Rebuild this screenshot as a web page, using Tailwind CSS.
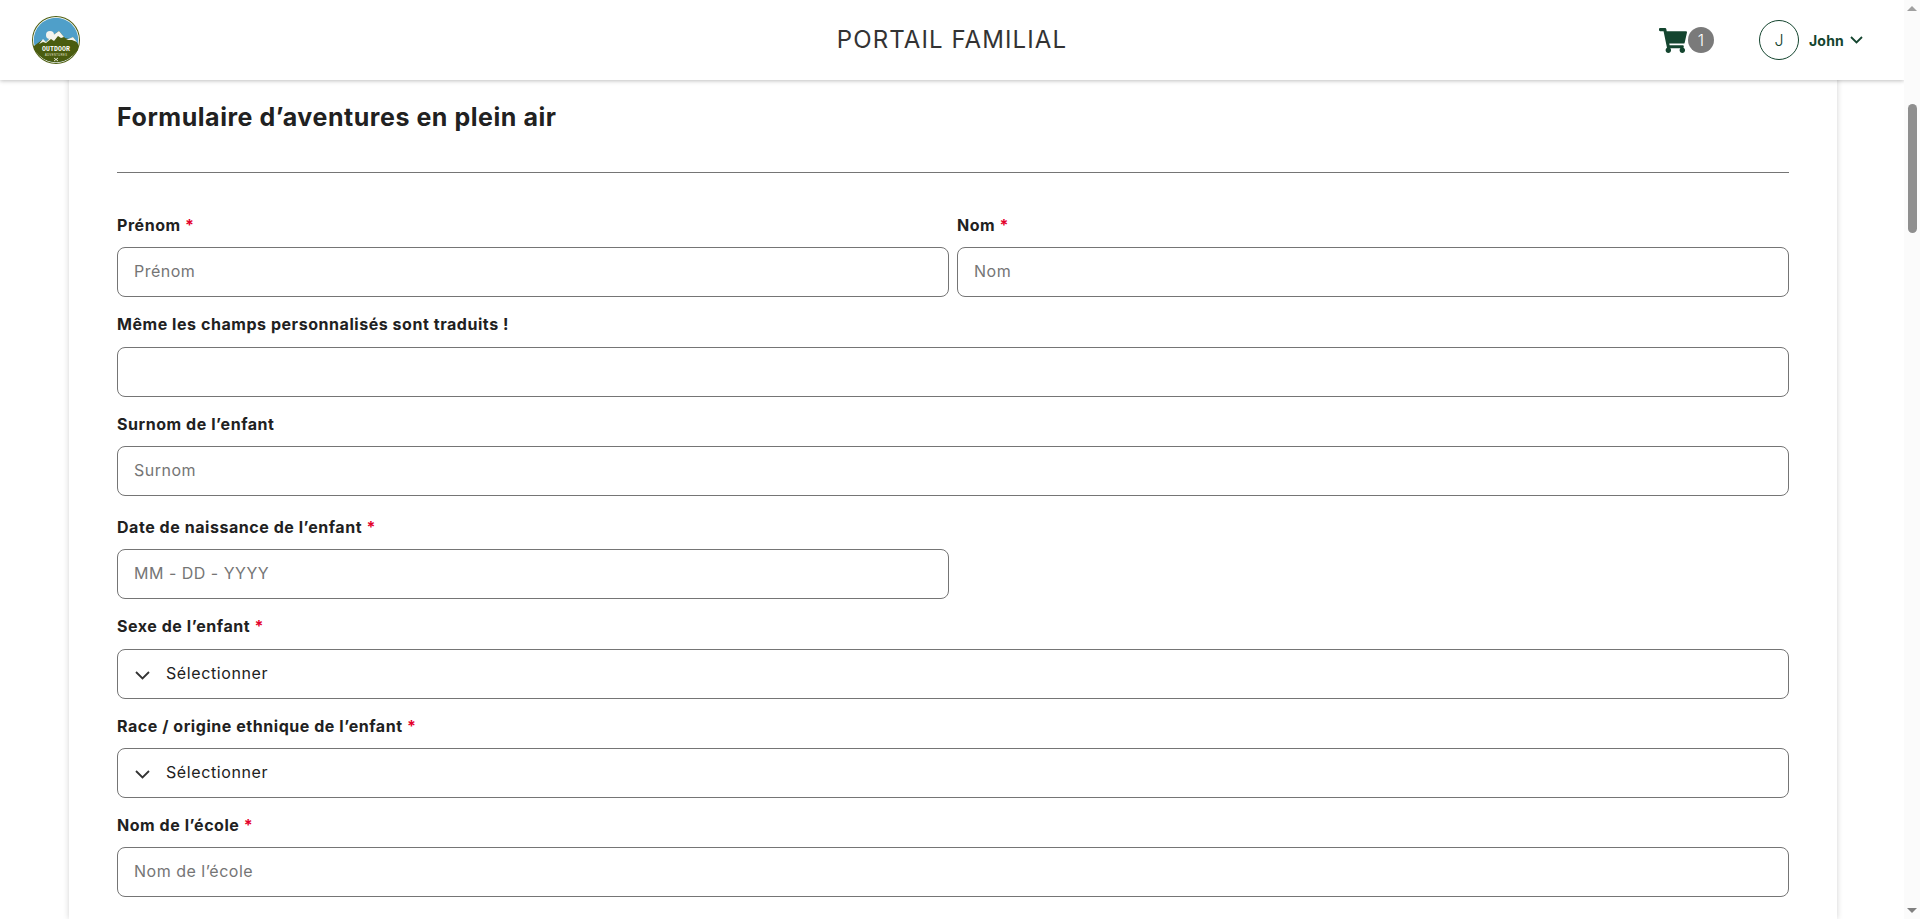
<!DOCTYPE html>
<html lang="fr">
<head>
<meta charset="utf-8">
<title>Portail familial</title>
<script src="https://cdn.jsdelivr.net/npm/@tailwindcss/browser@4"></script>
</head>
<body class="h-[919px] overflow-hidden bg-white font-['Inter','Liberation_Sans',sans-serif] text-[#212121]">
<div class="flex h-[919px]">
  <div class="relative flex h-full min-w-0 flex-1 flex-col overflow-hidden">
    <header class="relative z-10 grid h-[80px] shrink-0 grid-cols-[1fr_auto_1fr] items-center bg-white px-[32px] shadow-[0_1px_4px_rgba(0,0,0,0.25)]">
      <div class="flex items-center">
        <svg class="h-[48px] w-[48px]" viewBox="0 0 48 48" role="img" aria-label="Outdoor Adventures">
          <circle cx="24" cy="24" r="24" fill="#4f5f12"/>
          <circle cx="24" cy="24" r="23" fill="#fff"/>
          <circle cx="24" cy="24" r="22.2" fill="#4f9fc9"/>
          <path d="M2 30 L10 24 L14 26 L20 20 L27 15 L33 22 L37 23 L41 21 L46 28 L46 34 Q36 46 24 46 Q12 46 3 35Z" fill="#4a5c0f"/>
          <path d="M7 28 L11 23 L14 26 L20 20 L27 15 L32 21 L29 22 L26 20 L22 25 L19 23 L14 27 L11 26Z M34 24 L41 21 L45 26 L40 24Z" fill="#f4f4ee"/>
          <path d="M1.8 30 Q24 26 46.200 30 L46 33 Q36 47 24 46.200 Q12 47 2 33Z" fill="#4a5c0f"/>
          <circle cx="18" cy="19" r="4" fill="#f4f4ee"/>
          <text x="24" y="35" text-anchor="middle" font-family="Liberation Mono, monospace" font-size="6.5" font-weight="700" fill="#fff" textLength="28">OUTDOOR</text>
          <text x="24" y="40" text-anchor="middle" font-family="Liberation Sans, sans-serif" font-size="2.6" fill="#e6e6d6" textLength="22">ADVENTURES</text>
          <path d="M22 42 L26 45 M26 42 L22 45" stroke="#fff" stroke-width="0.8"/>
        </svg>
      </div>
      <h1 class="text-[24px] leading-none font-normal tracking-[1.1px] text-[#333]">PORTAIL FAMILIAL</h1>
      <div class="flex items-center justify-end pr-[9px]">
        <svg class="h-[25px] w-[28px] fill-[#14452f]" viewBox="0 0 576 512" aria-hidden="true"><path d="M528.12 301.319l47.273-208C578.806 78.301 567.391 64 551.99 64H159.208l-9.166-44.81C147.758 8.021 137.93 0 126.529 0H24C10.745 0 0 10.745 0 24v16c0 13.255 10.745 24 24 24h69.883l70.248 343.435C147.325 417.1 136 435.222 136 456c0 30.928 25.072 56 56 56s56-25.072 56-56c0-15.674-6.447-29.835-16.824-40h209.647C430.447 426.165 424 440.326 424 456c0 30.928 25.072 56 56 56s56-25.072 56-56c0-22.172-12.888-41.332-31.579-50.405l5.517-24.276c3.413-15.018-8.002-29.319-23.403-29.319H218.117l-6.545-32h293.145c11.206 0 20.92-7.754 23.403-18.681z"/></svg>
        <span class="ml-[1px] flex h-[26px] w-[26px] items-center justify-center rounded-full bg-[#7a7a7a] text-[16px] font-light text-white">1</span>
        <span class="ml-[45px] flex h-[40px] w-[40px] items-center justify-center rounded-full border border-[#14452f] text-[16px] font-light text-[#14452f]">J</span>
        <span class="ml-[10px] text-[14px] font-bold tracking-[0.2px] text-[#14452f]">John</span>
        <svg class="ml-[6px] h-[8px] w-[13px]" viewBox="0 0 13 8" fill="none" stroke="#14452f" stroke-width="1.8" aria-hidden="true"><path d="M1 1l5.500 5.500L12 1"/></svg>
      </div>
    </header>
    <main class="-mt-[4px] mr-[67px] ml-[69px] flex-1 bg-white px-[48px] shadow-[0_0_6px_rgba(0,0,0,0.18)]">
      <h2 class="mt-[21px] h-[40px] text-[25px] leading-[40px] font-bold tracking-[0.55px] text-[#212121]">Formulaire d’aventures en plein air</h2>
      <hr class="mt-[35px] border-t border-[#757575]">
      <form class="mt-[39px] flex flex-col">
        <div class="flex gap-[8px]">
          <div class="flex-1">
            <label class="block h-[26px] text-[16px] leading-[27px] font-bold tracking-[0.55px]">Prénom <span class="text-[#e4002b]">*</span></label>
            <input class="mt-[9px] block h-[50px] w-full rounded-[8px] border border-[#757575] bg-white px-[16px] pb-[2px] text-[16px] tracking-[0.5px] placeholder:text-[#757575]" placeholder="Prénom">
          </div>
          <div class="flex-1">
            <label class="block h-[26px] text-[16px] leading-[27px] font-bold tracking-[0.55px]">Nom <span class="text-[#e4002b]">*</span></label>
            <input class="mt-[9px] block h-[50px] w-full rounded-[8px] border border-[#757575] bg-white px-[16px] pb-[2px] text-[16px] tracking-[0.5px] placeholder:text-[#757575]" placeholder="Nom">
          </div>
        </div>
        <div class="mt-[14px]">
          <label class="block h-[26px] text-[16px] leading-[27px] font-bold tracking-[0.55px]">Même les champs personnalisés sont traduits !</label>
          <input class="mt-[10px] block h-[50px] w-full rounded-[8px] border border-[#757575] bg-white px-[16px] text-[16px]">
        </div>
        <div class="mt-[14px]">
          <label class="block h-[26px] text-[16px] leading-[27px] font-bold tracking-[0.55px]">Surnom de l’enfant</label>
          <input class="mt-[9px] block h-[50px] w-full rounded-[8px] border border-[#757575] bg-white px-[16px] pb-[2px] text-[16px] tracking-[0.5px] placeholder:text-[#757575]" placeholder="Surnom">
        </div>
        <div class="mt-[18px]">
          <label class="block h-[26px] text-[16px] leading-[27px] font-bold tracking-[0.55px]">Date de naissance de l’enfant <span class="text-[#e4002b]">*</span></label>
          <input class="mt-[9px] block h-[50px] w-[832px] rounded-[8px] border border-[#757575] bg-white px-[16px] pb-[2px] text-[16px] tracking-[0.5px] placeholder:text-[#757575]" placeholder="MM - DD - YYYY">
        </div>
        <div class="mt-[14px]">
          <label class="block h-[26px] text-[16px] leading-[27px] font-bold tracking-[0.55px]">Sexe de l’enfant <span class="text-[#e4002b]">*</span></label>
          <div class="mt-[10px] flex h-[50px] items-center rounded-[8px] border border-[#757575] bg-white pb-[2px] pl-[17px] text-[16px] tracking-[0.6px] text-[#212121]">
            <svg class="mt-[4px] h-[9px] w-[15px]" viewBox="0 0 15 9" fill="none" stroke="#333" stroke-width="1.8" aria-hidden="true"><path d="M1 1l6.500 6.500L14 1"/></svg>
            <span class="ml-[16px]">Sélectionner</span>
          </div>
        </div>
        <div class="mt-[14px]">
          <label class="block h-[26px] text-[16px] leading-[27px] font-bold tracking-[0.55px]">Race / origine ethnique de l’enfant <span class="text-[#e4002b]">*</span></label>
          <div class="mt-[9px] flex h-[50px] items-center rounded-[8px] border border-[#757575] bg-white pb-[2px] pl-[17px] text-[16px] tracking-[0.6px] text-[#212121]">
            <svg class="mt-[4px] h-[9px] w-[15px]" viewBox="0 0 15 9" fill="none" stroke="#333" stroke-width="1.8" aria-hidden="true"><path d="M1 1l6.500 6.500L14 1"/></svg>
            <span class="ml-[16px]">Sélectionner</span>
          </div>
        </div>
        <div class="mt-[14px]">
          <label class="block h-[26px] text-[16px] leading-[27px] font-bold tracking-[0.55px]">Nom de l’école <span class="text-[#e4002b]">*</span></label>
          <input class="mt-[9px] block h-[50px] w-full rounded-[8px] border border-[#757575] bg-white px-[16px] pb-[2px] text-[16px] tracking-[0.5px] placeholder:text-[#757575]" placeholder="Nom de l’école">
        </div>
      </form>
    </main>
  </div>
  <div class="relative h-full w-[16px] shrink-0 bg-[#fbfbfb]">
    <span class="absolute top-[6px] left-[3px] h-0 w-0 border-x-[5px] border-b-[5px] border-x-transparent border-b-[#a0a0a0]"></span>
    <span class="absolute top-[104px] left-[4px] h-[129px] w-[9px] rounded-full bg-[#8f8f8f]"></span>
    <span class="absolute bottom-[6px] left-[3px] h-0 w-0 border-x-[5px] border-t-[5px] border-x-transparent border-t-[#808080]"></span>
  </div>
</div>
</body>
</html>
